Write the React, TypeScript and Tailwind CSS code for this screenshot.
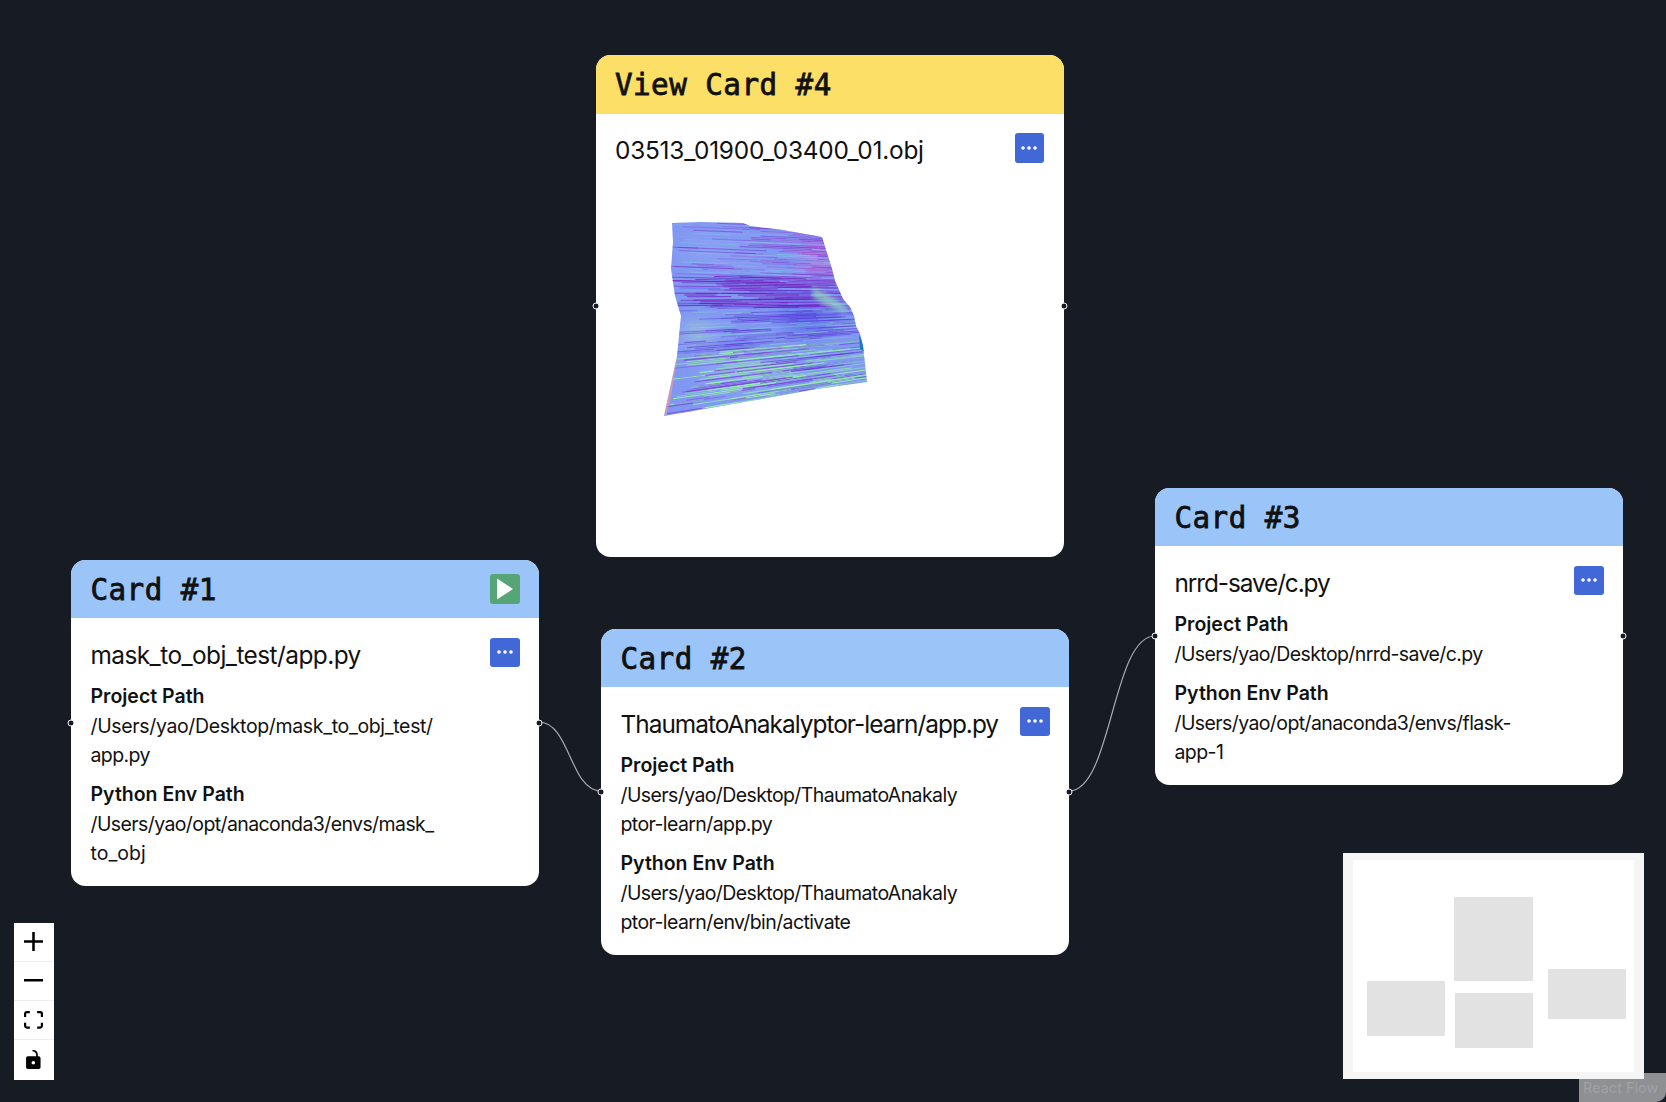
const titleFont = { fontFamily: '"DejaVu Sans Mono", monospace' };

type Line = { text: string; cls?: string };
type Section = { label: string; lines: Line[] };

type CardProps = {
  title: string;
  file: string;
  fileCls: string;
  sections?: Section[];
  headerBg?: string;
  play?: boolean;
  pos: string;
  children?: React.ReactNode;
};

function MoreButton() {
  return (
    <button className="flex h-[29.5px] w-[29.5px] shrink-0 items-center justify-center rounded-[3px] bg-[#4267d6]">
      <svg width="16" height="4" viewBox="0 0 16 4" fill="white">
        <circle cx="2" cy="2" r="1.8" />
        <circle cx="8" cy="2" r="1.8" />
        <circle cx="14" cy="2" r="1.8" />
      </svg>
    </button>
  );
}

function PlayButton() {
  return (
    <button className="flex h-[30px] w-[29.5px] items-center justify-center rounded-[3px] bg-[#55a576]">
      <svg width="18" height="22" viewBox="0 0 18 22" fill="white">
        <path d="M1 0.5 L17 11 L1 21.5 Z" />
      </svg>
    </button>
  );
}

function Handle({ side }: { side: "left" | "right" }) {
  return (
    <div
      className={
        side === "left"
          ? "absolute left-0 top-1/2 h-[7px] w-[7px] -translate-x-1/2 -translate-y-1/2 rounded-full border border-white bg-[#1a192b]"
          : "absolute right-0 top-1/2 h-[7px] w-[7px] translate-x-1/2 -translate-y-1/2 rounded-full border border-white bg-[#1a192b]"
      }
    />
  );
}

function Card({ title, file, fileCls, sections, headerBg, play, pos, children }: CardProps) {
  return (
    <div className={`absolute w-[468px] rounded-[14.6px] bg-white ${pos}`}>
      <Handle side="left" />
      <Handle side="right" />
      <div
        className={`flex h-[58.5px] items-center justify-between rounded-t-[14.6px] px-[19.5px] ${headerBg || "bg-[#9bc5f8]"}`}
      >
        <h2
          className="pt-[4px] text-[29.25px] font-normal tracking-[0.45px] text-[#111111] [-webkit-text-stroke:0.8px_#111111]"
          style={titleFont}
        >
          {title}
        </h2>
        {play && <PlayButton />}
      </div>
      <div className="px-[19.5px] pt-[19.5px] pb-[17.5px] font-['Inter',sans-serif] text-[#111111]">
        <div className="flex items-start justify-between">
          <div className={`whitespace-nowrap text-[24.4px] leading-[34px] ${fileCls}`}>{file}</div>
          <MoreButton />
        </div>
        {sections && (
          <div className="pt-[1px]">
            {sections.map((s) => (
              <div key={s.label} className="mt-[9.25px] text-[19.5px] leading-[29.25px]">
                <div className="pb-[1px] font-semibold">{s.label}</div>
                {s.lines.map((l) => (
                  <div key={l.text} className={`whitespace-nowrap ${l.cls || "tracking-[-0.6px]"}`}>
                    {l.text}
                  </div>
                ))}
              </div>
            ))}
          </div>
        )}
        {children}
      </div>
    </div>
  );
}

// stripes for the rendered mesh, seeded so the picture stays the same
function makeStripes() {
  let seed = 11;
  const rnd = () => {
    seed = (seed * 16807) % 2147483647;
    return seed / 2147483647;
  };
  const out: { d: string; color: string; w: number; o: number }[] = [];
  for (let y = 6; y < 215; y += 1.6) {
    const slope = 0.04 - 0.2 * Math.min(1, Math.max(0, (y - 60) / 130));
    const dense = y > 68 && y < 100;
    const count = dense ? 5 : 3 + Math.floor(rnd() * 3);
    for (let i = 0; i < count; i++) {
      const x1 = 15 + rnd() * 170;
      const len = 20 + rnd() * (dense ? 120 : 80);
      let color = "#9a9cf4";
      let o = 0.5;
      const r = rnd();
      if (dense && x1 < 130) {
        color = r < 0.8 ? "#7420c0" : "#5a62e6";
        o = 0.85;
      } else if (y > 140) {
        if (x1 < 100 || r < 0.2) {
          color = r < 0.55 ? "#98f5a4" : "#7c48dc";
          o = 0.9;
        } else {
          color = r < 0.7 ? "#6238d8" : "#8cd8c8";
          o = 0.7;
        }
      } else if (y > 100) {
        color = r < 0.5 ? "#5c38d8" : r < 0.75 ? "#8ab4ee" : "#8ccfd4";
        o = 0.6;
      } else if (y < 62 && x1 > 100) {
        color = r < 0.55 ? "#a040cc" : r < 0.8 ? "#86c8e0" : "#7048d8";
        o = 0.65;
      } else if (r < 0.5) {
        color = "#7c38d0";
        o = 0.6;
      } else if (r < 0.75) {
        color = "#8cc0f0";
        o = 0.55;
      }
      const y1 = y + slope * (x1 - 100);
      const y2 = y + slope * (x1 + len - 100);
      out.push({
        d: `M${x1.toFixed(1)} ${y1.toFixed(1)}L${(x1 + len).toFixed(1)} ${y2.toFixed(1)}`,
        color,
        w: 0.5 + rnd() * 0.6,
        o,
      });
    }
  }
  return out;
}

const meshEdge =
  "M22 14 L50 13 L93 14 L100 17 L133 21 L172 28 L175 38 L182 60 L185 72 L193 90 L200 98 L204 107 L206 117 L210 125 L213 137 L217 173 L167 180 L100 192 L14 207 L17 193 L27 147 L29 127 L31 107 L25 87 L21 60 L23 33 Z";

function Mesh() {
  const stripes = makeStripes();
  return (
    <svg width="230" height="220" viewBox="0 0 230 220" className="mt-[42px] ml-[35px]">
      <defs>
        <clipPath id="meshClip">
          <path d={meshEdge} />
        </clipPath>
        <filter id="soft">
          <feGaussianBlur stdDeviation="0.35" />
        </filter>
        <filter id="patch">
          <feGaussianBlur stdDeviation="2.2" />
        </filter>
        <filter id="blob">
          <feGaussianBlur stdDeviation="9" />
        </filter>
        <filter id="edgeBlur">
          <feGaussianBlur stdDeviation="0.5" />
        </filter>
      </defs>
      <g filter="url(#edgeBlur)">
        <g clipPath="url(#meshClip)">
          <rect width="230" height="220" fill="#8098f2" />
          <g filter="url(#blob)">
            <ellipse cx="160" cy="108" rx="30" ry="16" fill="#5c70ea" />
            <ellipse cx="70" cy="45" rx="40" ry="14" fill="#86a0f2" />
            <ellipse cx="100" cy="165" rx="50" ry="16" fill="#8cacf2" />
            <ellipse cx="170" cy="50" rx="20" ry="20" fill="#a888e8" />
            <ellipse cx="48" cy="125" rx="16" ry="9" fill="#a4c4da" />
          </g>
          <g filter="url(#soft)" fill="none">
            {stripes.map((s, i) => (
              <path key={i} d={s.d} stroke={s.color} strokeWidth={s.w} opacity={s.o} />
            ))}
          </g>
          <path d="M162 78 C176 84 188 90 198 100 L194 104 C180 98 170 94 163 88 Z" fill="#96e6bc" opacity="0.65" filter="url(#patch)" />
          <path d="M209 125 L214 135 L214 142 L210 140 Z" fill="#1f78c8" filter="url(#soft)" />
          <path d="M14 207 L17 193 L26 150 L27 150 L20 193 L16 206 Z" fill="#f09a9a" opacity="0.7" />
        </g>
      </g>
    </svg>
  );
}

function Controls() {
  const btn = "flex h-[39.25px] items-center justify-center border-b border-[#eeeeee] last:border-b-0";
  return (
    <div className="absolute left-[14px] top-[922.5px] w-[39.5px] bg-white">
      <div className={btn}>
        <svg width="19" height="19" viewBox="0 0 32 32">
          <path d="M32 18.133H18.133V32h-4.266V18.133H0v-4.266h13.867V0h4.266v13.867H32z" />
        </svg>
      </div>
      <div className={btn}>
        <svg width="19" height="3" viewBox="0 0 32 5">
          <path d="M0 0h32v4.2H0z" />
        </svg>
      </div>
      <div className={btn}>
        <svg width="19" height="18" viewBox="0 0 32 30">
          <path d="M3.692 4.63c0-.53.4-.938.939-.938h5.215V0H4.708C2.13 0 0 2.054 0 4.63v5.216h3.692V4.631zM27.354 0h-5.2v3.692h5.17c.53 0 .984.4.984.939v5.215H32V4.631A4.624 4.624 0 0027.354 0zm.954 24.83c0 .532-.4.94-.939.94h-5.215v3.768h5.215c2.577 0 4.631-2.13 4.631-4.707v-5.139h-3.692v5.139zm-23.677.94c-.531 0-.939-.4-.939-.94v-5.138H0v5.139c0 2.577 2.13 4.707 4.708 4.707h5.138V25.77H4.631z" />
        </svg>
      </div>
      <div className={btn}>
        <svg width="15" height="19" viewBox="0 0 25 32">
          <path d="M21.333 10.667H19.81V7.619C19.81 3.429 16.38 0 12.19 0c-4.114 1.828-1.37 2.133.305 2.438 1.676.305 4.42 2.59 4.42 5.181v3.048H3.047A3.056 3.056 0 000 13.714v15.238A3.056 3.056 0 003.048 32h18.285a3.056 3.056 0 003.048-3.048V13.714a3.056 3.056 0 00-3.048-3.047zM12.19 24.533a3.056 3.056 0 01-3.047-3.047 3.056 3.056 0 013.047-3.048 3.056 3.056 0 013.048 3.048 3.056 3.056 0 01-3.048 3.047z" />
        </svg>
      </div>
    </div>
  );
}

function MiniMap() {
  return (
    <svg width="301" height="226" viewBox="1343 853 301 226" className="absolute left-[1343px] top-[853px]">
      <rect x="1343" y="853" width="301" height="226" fill="#f5f5f5" />
      <rect x="1353" y="860" width="281" height="212" fill="#ffffff" />
      <g fill="#e2e2e2">
        <rect x="1367" y="981" width="78" height="55" rx="1" />
        <rect x="1454" y="897" width="79" height="84" rx="1" />
        <rect x="1455" y="993" width="78" height="55" rx="1" />
        <rect x="1548" y="969" width="78" height="50" rx="1" />
      </g>
    </svg>
  );
}

export default function App() {
  return (
    <div className="relative h-[1102px] w-[1666px] overflow-hidden bg-[#171b23]">
      <svg width="1666" height="1102" className="absolute left-0 top-0" fill="none" stroke="#a9a9ae" strokeWidth="1.2">
        <path d="M539 722 C570 722 570 791 601 791" />
        <path d="M1069 791 C1112 791 1112 636 1155 636" />
      </svg>

      <Card
        title="View Card #4"
        file="03513_01900_03400_01.obj"
        fileCls="tracking-[-0.22px]"
        headerBg="bg-[#fbdf67]"
        pos="left-[595.5px] top-[55px] h-[502px]"
      >
        <Mesh />
      </Card>

      <Card
        title="Card #1"
        file="mask_to_obj_test/app.py"
        fileCls="tracking-[-0.55px]"
        play
        pos="left-[71px] top-[559.5px]"
        sections={[
          {
            label: "Project Path",
            lines: [{ text: "/Users/yao/Desktop/mask_to_obj_test/", cls: "tracking-[-0.35px]" }, { text: "app.py" }],
          },
          {
            label: "Python Env Path",
            lines: [{ text: "/Users/yao/opt/anaconda3/envs/mask_" }, { text: "to_obj", cls: "tracking-[0px]" }],
          },
        ]}
      />

      <Card
        title="Card #2"
        file="ThaumatoAnakalyptor-learn/app.py"
        fileCls="tracking-[-0.98px]"
        pos="left-[601px] top-[628.5px]"
        sections={[
          {
            label: "Project Path",
            lines: [{ text: "/Users/yao/Desktop/ThaumatoAnakaly" }, { text: "ptor-learn/app.py" }],
          },
          {
            label: "Python Env Path",
            lines: [{ text: "/Users/yao/Desktop/ThaumatoAnakaly" }, { text: "ptor-learn/env/bin/activate" }],
          },
        ]}
      />

      <Card
        title="Card #3"
        file="nrrd-save/c.py"
        fileCls="tracking-[-1.1px]"
        pos="left-[1155px] top-[487.5px]"
        sections={[
          { label: "Project Path", lines: [{ text: "/Users/yao/Desktop/nrrd-save/c.py" }] },
          { label: "Python Env Path", lines: [{ text: "/Users/yao/opt/anaconda3/envs/flask-" }, { text: "app-1" }] },
        ]}
      />

      <Controls />

      <div className="absolute bottom-0 right-0 flex h-[29px] w-[87px] items-center rounded-br-[10px] bg-[#8e9094] pl-[4px] font-['Inter',sans-serif] text-[14.5px] text-[#a0a2a6]">
        React Flow
      </div>
      <MiniMap />
    </div>
  );
}
